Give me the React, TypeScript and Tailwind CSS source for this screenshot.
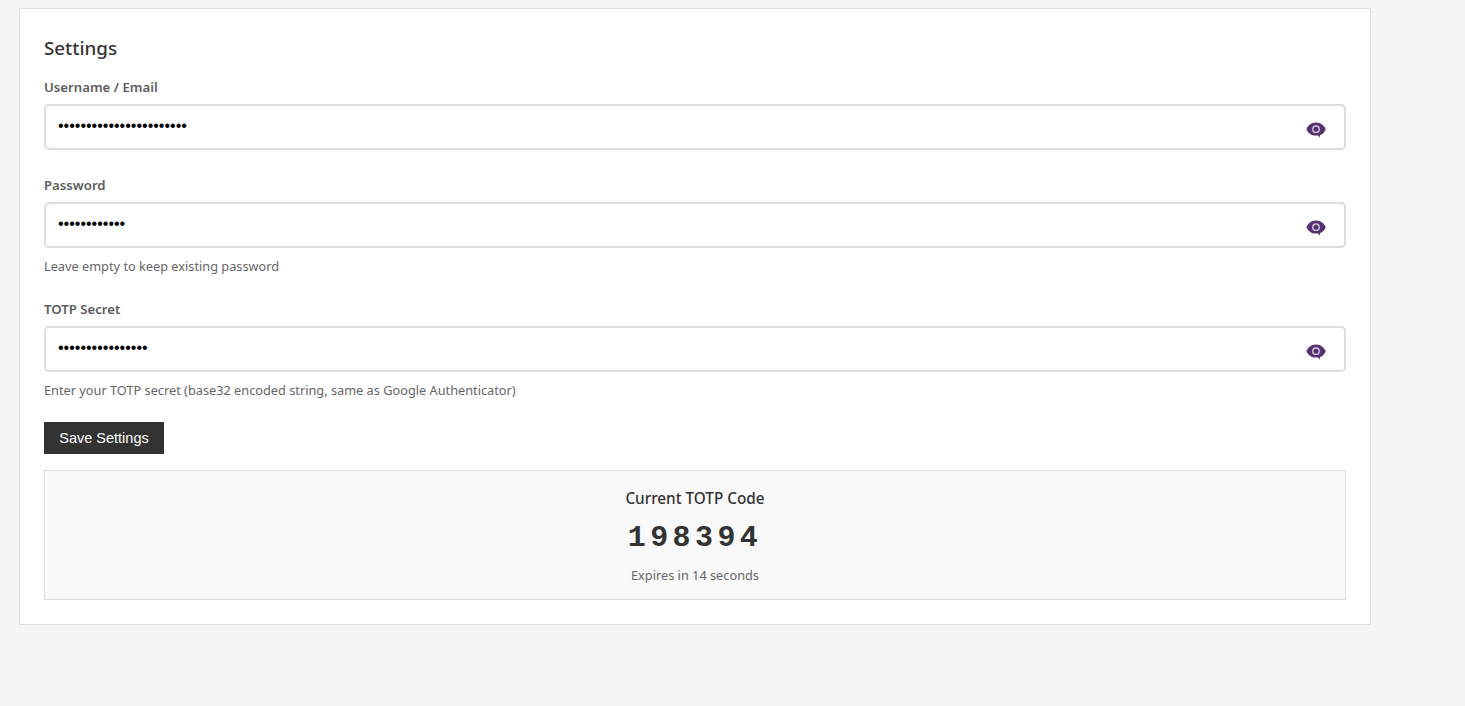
const sans = "font-['Noto_Sans','Open_Sans',sans-serif]";

function Eye() {
    return (
        <svg width="20" height="16" viewBox="0 0 20 16" className="absolute right-[20px] top-[18px]">
            <path
                d="M10 .6C5.4 .6 2 3.4 .4 7.2 2 11 5.4 13.6 10 13.6h2.2l1.4 2.2.5-2.8c2.7-.9 4.6-3 5.6-5.8C18 3.4 14.6 .6 10 .6z"
                fill="#583170"
            />
            <circle cx="10" cy="7.2" r="3.9" fill="#cfc8d6" />
            <circle cx="10" cy="7.2" r="2.5" fill="#583170" />
        </svg>
    );
}

function Field({ label, value, help }: { label: string; value: string; help?: string }) {
    return (
        <div className={help ? "mb-[25px]" : "mb-[26px]"}>
            <label className="block mb-2 text-[13.2px] leading-[18px] font-semibold text-[#5c5c5c]">{label}</label>
            <div className="relative">
                <input
                    type="password"
                    defaultValue={value}
                    readOnly
                    className="block w-full h-[46px] pl-3 pr-10 pb-[2px] bg-white border-2 border-[#ddd] rounded-[5px] text-[16px] text-black font-['Liberation_Sans',sans-serif] outline-none"
                />
                <Eye />
            </div>
            {help && <p className="mt-[9px] text-[12.75px] leading-[18px] text-[#666]">{help}</p>}
        </div>
    );
}

export default function App() {
    return (
        <main className={`min-h-screen bg-[#f5f5f5] pt-2 pl-[19px] ${sans}`}>
            <section className="w-[1352px] h-[617px] bg-white border border-[#ddd] px-6 pt-6">
                <h2 className="mb-[15px] text-[18.8px] leading-[30px] font-medium text-[#333]">Settings</h2>
                <Field label="Username / Email" value="•••••••••••••••••••••••" />
                <Field label="Password" value="••••••••••••" help="Leave empty to keep existing password" />
                <Field
                    label="TOTP Secret"
                    value="••••••••••••••••"
                    help="Enter your TOTP secret (base32 encoded string, same as Google Authenticator)"
                />
                <button className="block -mt-[2px] w-[120px] h-8 pt-[2px] bg-[#333] text-white text-[14.5px] font-['Liberation_Sans',sans-serif]">
                    Save Settings
                </button>
                <div className="mt-4 h-[130px] bg-[#f9f9f9] border border-[#ddd] flex flex-col items-center pt-[17px]">
                    <h3 className="text-[15.3px] leading-5 font-medium text-[#333]">Current TOTP Code</h3>
                    <div className="mt-[14px] text-[30px] leading-8 font-bold tracking-[4.4px] text-[#333] font-['Liberation_Mono',monospace]">
                        198394
                    </div>
                    <p className="mt-[12px] text-[12.75px] leading-[18px] text-[#666]">Expires in 14 seconds</p>
                </div>
            </section>
        </main>
    );
}
